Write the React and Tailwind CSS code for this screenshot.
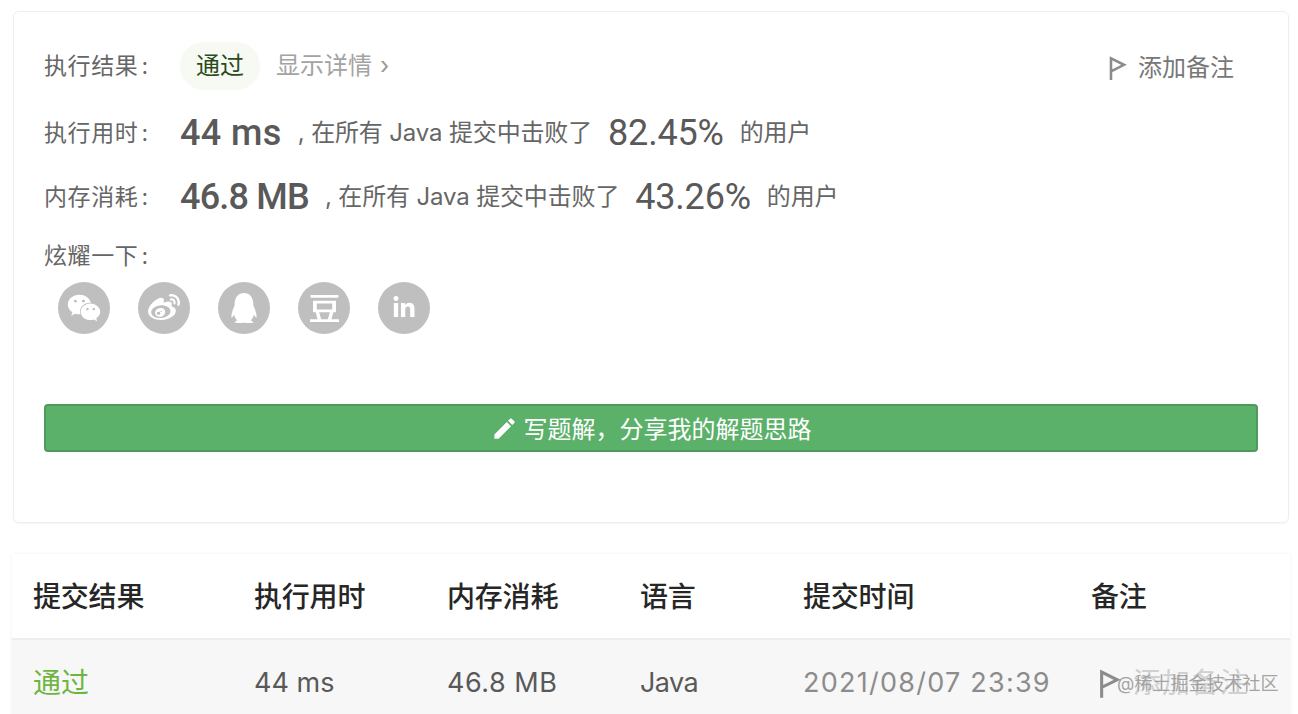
import React from "react";
import { FaWeixin, FaWeibo, FaQq, FaLinkedinIn } from "react-icons/fa";
import { MdEdit } from "react-icons/md";
import { SiDouban } from "react-icons/si";

const font = "font-['Inter','Noto_Sans_CJK_SC',sans-serif]";

const FlagIcon = ({ className }) => (
  <svg viewBox="0 0 20 26" className={className} fill="none" stroke="currentColor" strokeWidth="2.8">
    <path d="M2.4 26V2.6L16.5 9.6 2.4 16.6" />
  </svg>
);

const Label = ({ text, className = "w-[136px]" }) => (
  <span className={`${className} text-[23px] leading-8 tracking-[0.6px] text-[#666]`}>
    {text}
    <span className="ml-[3px]">:</span>
  </span>
);

const StatRow = ({ label, value, percent, className, valueClass }) => (
  <div className={`flex items-center text-[#666] ${className}`}>
    <Label text={label} />
    <span className={`font-['Roboto',sans-serif] text-[36px] leading-10 font-medium text-[#595959] ${valueClass}`}>{value}</span>
    <span className="ml-4 text-[24px] leading-8 tracking-[-0.15px]">, 在所有 Java 提交中击败了</span>
    <span className="ml-4 font-['Roboto',sans-serif] text-[36px] leading-10 text-[#595959] tracking-[-0.2px]">{percent}</span>
    <span className="ml-4 text-[24px] leading-8 tracking-[-0.2px]">的用户</span>
  </div>
);

const shareIcons = [
  { key: "wechat", icon: <FaWeixin className="h-[34px] w-[34px]" /> },
  { key: "weibo", icon: <FaWeibo className="h-[32px] w-[32px]" /> },
  { key: "qq", icon: <FaQq className="h-[30px] w-[30px]" /> },
  { key: "douban", icon: <SiDouban className="h-[29px] w-[29px]" /> },
  { key: "linkedin", icon: <FaLinkedinIn className="h-[24px] w-[24px]" /> },
];

const headers = ["提交结果", "执行用时", "内存消耗", "语言", "提交时间", "备注"];
const cols = "grid grid-cols-[221px_193px_193px_163px_288px_1fr] pl-[21px]";

export default function App() {
  return (
    <div className={`relative h-[714px] overflow-hidden bg-white pt-[11px] pl-3 pr-2 ${font}`}>
      <div className="ml-px mr-px h-[512px] rounded-md border border-[#eeeeee] pl-[30px] pr-[30px] shadow-[0_1px_2px_rgba(0,0,0,0.04)]">
        <div className="flex items-center justify-between pt-[30px]">
          <div className="flex items-center text-[#666]">
            <Label text="执行结果" />
            <span className="flex h-12 w-[80px] items-center justify-center rounded-3xl bg-[#f6faf3] text-[24px] text-[#2b4a1c]">通过</span>
            <span className="ml-4 text-[24px] leading-8 text-[#a3a3a3]">显示详情</span>
            <span className="ml-2 text-[24px] leading-8 text-[#999]">›</span>
          </div>
          <div className="mr-[24px] mt-1 flex items-center gap-[10px] text-[#777]">
            <FlagIcon className="h-[24px] w-[20px] text-[#8c8c8c]" />
            <span className="text-[24px] leading-8">添加备注</span>
          </div>
        </div>

        <StatRow className="mt-[23px]" label="执行用时" value="44 ms" valueClass="tracking-[0.4px]" percent="82.45%" />
        <StatRow className="mt-6" label="内存消耗" value="46.8 MB" valueClass="tracking-[-0.8px]" percent="43.26%" />

        <div className="mt-[23px]">
          <Label text="炫耀一下" />
        </div>
        <div className="mt-[10px] flex gap-[28px] pl-[14px]">
          {shareIcons.map((item) => (
            <div key={item.key} className="flex h-[52px] w-[52px] items-center justify-center rounded-full bg-[#bfbfbf] text-white">
              {item.icon}
            </div>
          ))}
        </div>

        <button
          type="button"
          className="mt-[70px] flex h-12 w-full items-center justify-center gap-[6px] rounded border-2 border-[#4f9a5b] bg-[#5cb16a] text-[24px] text-white"
        >
          <MdEdit className="h-[27px] w-[27px]" />
          <span className="font-['Noto_Sans_CJK_SC',sans-serif]">写题解{"\uFF0C"}分享我的解题思路</span>
        </button>
      </div>

      <div className="mt-[31px] shadow-[0_0_4px_rgba(0,0,0,0.06)]">
        <div className={`${cols} h-[86px] items-center border-b-2 border-[#eeeeee] pt-px text-[28px] font-medium text-[#262626]`}>
          {headers.map((h) => (
            <span key={h} className="tracking-[-0.2px]">{h}</span>
          ))}
        </div>
        <div className={`${cols} h-[88px] items-center bg-[#f7f7f7] pb-[2px] text-[27px] text-[#595959]`}>
          <span className="text-[28px] text-[#6eb53f]">通过</span>
          <span>44 ms</span>
          <span className="tracking-[0.5px]">46.8 MB</span>
          <span className="tracking-[-0.6px]">Java</span>
          <span className="text-[#8c8c8c] tracking-[1.25px]">2021/08/07 23:39</span>
          <span className="flex items-center gap-3 pl-2 text-[28px] tracking-[1px] text-[#d0d0d0]">
            <FlagIcon className="h-[31px] w-[22px] text-[#8c8c8c]" />
            添加备注
          </span>
        </div>
      </div>

      <div className="absolute left-[1117px] top-[672px] text-[18px] leading-6 text-[#999]/90">@稀土掘金技术社区</div>
    </div>
  );
}
